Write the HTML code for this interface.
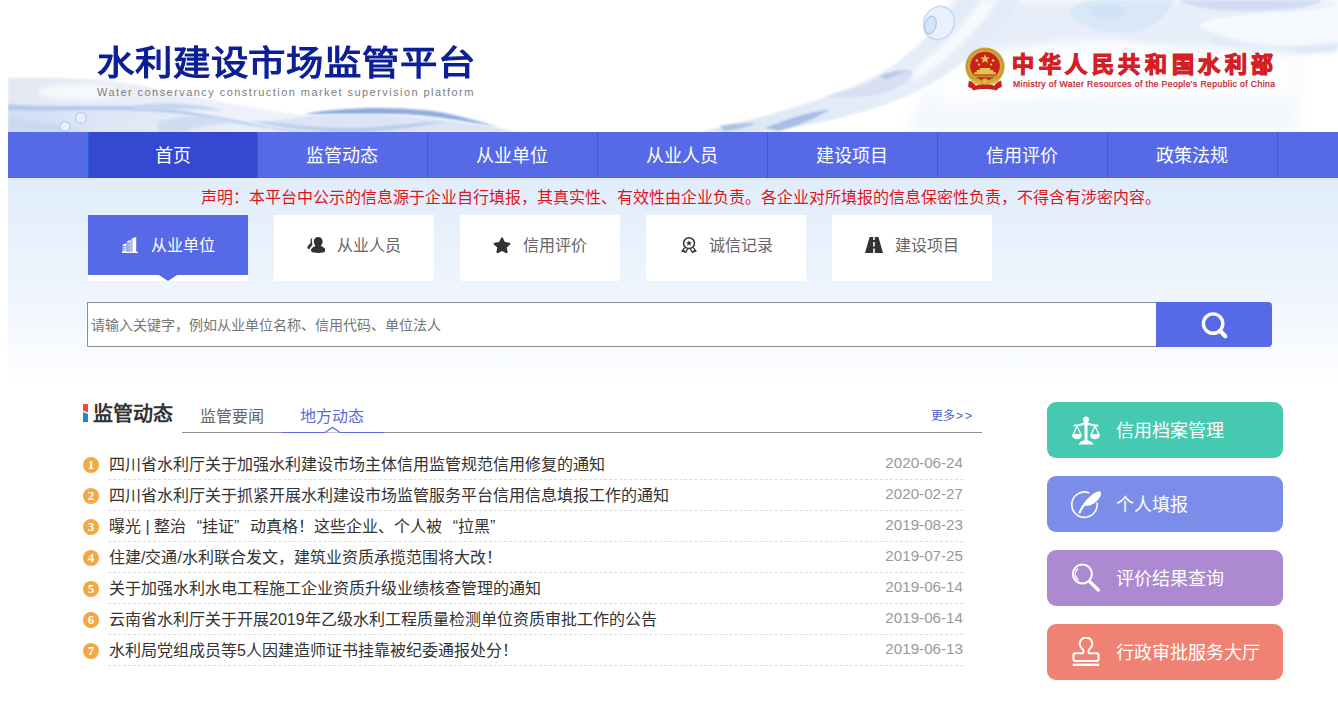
<!DOCTYPE html>
<html lang="zh-CN">
<head>
<meta charset="utf-8">
<title>水利建设市场监管平台</title>
<style>
*{box-sizing:border-box;}
html,body{margin:0;padding:0;}
body{width:1338px;height:713px;overflow:hidden;background:#fff;font-family:"Liberation Sans",sans-serif;color:#333;position:relative;}
a{text-decoration:none;color:inherit;}
ul{list-style:none;margin:0;padding:0;}
#wrap{position:absolute;left:8px;top:0;width:1330px;height:713px;overflow:hidden;background:#fff;}
/* header */
#header{position:absolute;left:0;top:0;width:1330px;height:132px;background:#fff;overflow:hidden;}
#header svg.bg{position:absolute;left:0;top:0;}
#logo{position:absolute;left:88.500px;top:39px;width:380px;height:48px;line-height:48px;font-size:34px;font-weight:normal;color:#0c1f96;white-space:nowrap;letter-spacing:0.4px;transform:scaleX(1.1);transform-origin:0 0;-webkit-text-stroke:1.2px #0c1f96;}
#logo-en{position:absolute;left:89px;top:84px;width:400px;height:16px;line-height:16px;font-size:11px;color:#7c7c7c;white-space:nowrap;letter-spacing:1.44px;}
#emblem{position:absolute;left:955.500px;top:47px;width:42px;height:44px;}
#mwr{position:absolute;left:1004px;top:48.500px;width:270px;height:32px;line-height:32px;font-size:22px;font-weight:bold;color:#d41f27;white-space:nowrap;letter-spacing:4.6px;-webkit-text-stroke:1.25px #d41f27;}
#mwr-en{position:absolute;left:1005px;top:78px;width:270px;height:12px;line-height:12px;font-size:8.6px;color:#c4202a;white-space:nowrap;letter-spacing:0.42px;-webkit-text-stroke:0.25px #c4202a;}
/* nav */
#nav{position:absolute;left:0;top:132px;width:1330px;height:46px;background:#566ae8;}
#nav ul{position:absolute;left:80px;top:0;width:1191px;height:46px;}
#nav li{position:absolute;top:0;height:46px;line-height:49px;padding-right:1px;text-align:center;font-size:18px;color:#fff;border-left:1px solid #2a62cf;overflow:hidden;white-space:nowrap;}
#nav li.on{background:#3448d2;}
#nav li:last-child{border-right:1px solid #2a62cf;}
/* band */
#band{position:absolute;left:0;top:178px;width:1330px;height:207px;background:linear-gradient(to bottom,#e1edfb 0%,#e8f1fc 30%,#eff5fd 55%,#f7fafe 80%,#fdfeff 100%);}
#notice{position:absolute;left:73px;top:185.5px;width:1200px;height:24px;line-height:24px;text-align:center;font-size:16px;color:#e0141e;white-space:nowrap;overflow:hidden;}
/* tabs */
.tab{position:absolute;top:215px;width:160px;height:66px;background:#fff;}
.tab .in{position:absolute;left:0;top:0;width:160px;height:60px;line-height:62px;font-size:16px;color:#666;white-space:nowrap;}
.tab .in span{position:absolute;left:63px;top:0;}
.tab .in svg{position:absolute;left:32px;top:20px;width:20px;height:20px;}
.tab.on .in{background:#566ae8;color:#fff;}
.tab.on:after{content:"";position:absolute;left:71px;top:60px;width:0;height:0;border-left:9px solid transparent;border-right:9px solid transparent;border-top:6px solid #566ae8;}
/* search */
#sinput{position:absolute;left:79px;top:302px;width:1070px;height:45px;border:1px solid #8a8e96;border-right:none;background:#fff;line-height:44px;font-size:14px;color:#757575;padding-left:3px;white-space:nowrap;overflow:hidden;}
#sbtn{position:absolute;left:1148px;top:302px;width:116px;height:45px;background:#566ae8;border-radius:0 4px 4px 0;}
#sbtn svg{position:absolute;left:0;top:0;}
/* news */
#ntitle{position:absolute;left:85px;top:400px;width:90px;height:28px;line-height:28px;font-size:20px;font-weight:bold;color:#333;white-space:nowrap;}
#nicon{position:absolute;left:75px;top:404px;width:5px;height:18px;}
.stab{position:absolute;top:405px;height:24px;line-height:24px;font-size:16px;color:#666;white-space:nowrap;}
#nline{position:absolute;left:174px;top:432px;width:800px;height:1px;background:#8d8f94;}
#more{position:absolute;left:923px;top:408px;width:50px;height:16px;line-height:16px;font-size:12px;color:#4a5dcf;white-space:nowrap;}#more span{letter-spacing:2px;margin-left:1px;}
#list li{position:absolute;left:75px;width:880px;height:31px;}
#list li i{position:absolute;left:0;top:8px;width:16px;height:16px;border-radius:8px;background:#f3a842;color:#fff;font-style:normal;font-weight:bold;font-size:13px;line-height:16px;text-align:center;font-family:"Liberation Serif",serif;}
#list li a{position:absolute;left:26px;top:5px;height:22px;line-height:22px;font-size:16px;color:#333;white-space:nowrap;}
#list li em{position:absolute;right:0;top:2.500px;height:22px;line-height:22px;font-size:15.200px;color:#999;font-style:normal;white-space:nowrap;}
#list li b{position:absolute;left:25px;right:0;top:30px;height:0;border-top:1px dashed #ddd;}
.ql,.qr{display:inline-block;width:16px;}.ql{text-align:right;}.qr{text-align:left;}
/* side */
.sb{position:absolute;left:1039px;width:236px;height:56px;border-radius:9px;color:#fff;font-size:18px;line-height:59.500px;white-space:nowrap;}
.sb span{position:absolute;left:69px;top:0;}
.sb svg{position:absolute;left:24px;top:13px;width:30px;height:30px;}
</style>
</head>
<body>
<div id="wrap">
  <div id="header">
    <svg class="bg" width="1330" height="132" viewBox="0 0 1330 132">
      <defs>
        <filter id="b1" x="-10%" y="-30%" width="120%" height="160%"><feGaussianBlur stdDeviation="0.8"/></filter>
        <filter id="b2" x="-10%" y="-30%" width="120%" height="160%"><feGaussianBlur stdDeviation="2"/></filter>
        <filter id="b4" x="-10%" y="-30%" width="120%" height="160%"><feGaussianBlur stdDeviation="4"/></filter>
        <filter id="b8" x="-10%" y="-40%" width="120%" height="180%"><feGaussianBlur stdDeviation="8"/></filter>
        <linearGradient id="lw" x1="0" y1="0" x2="1" y2="0"><stop offset="0" stop-color="#e3e8f3"/><stop offset="0.25" stop-color="#eaeef7"/><stop offset="0.6" stop-color="#f1f4fa"/><stop offset="1" stop-color="#fbfcfe"/></linearGradient>
        <linearGradient id="lw2" x1="0" y1="0" x2="1" y2="0"><stop offset="0" stop-color="#d3dff3"/><stop offset="0.4" stop-color="#dfe8f7"/><stop offset="1" stop-color="#eef3fb"/></linearGradient>
        <linearGradient id="rb" x1="0" y1="1" x2="1" y2="0"><stop offset="0" stop-color="#dbe5f6"/><stop offset="0.5" stop-color="#e6eef9"/><stop offset="1" stop-color="#e1eaf8"/></linearGradient>
      </defs>
      <!-- left wave -->
      <path d="M0 78 C45 77.500 90 78 125 84 C190 96 240 110 310 116 C390 122 450 118 520 132 L0 132 Z" fill="url(#lw)" filter="url(#b1)"/>
      <ellipse cx="72" cy="92" rx="42" ry="7.500" fill="#f6f8fc" filter="url(#b2)"/>
      <path d="M0 107 C50 110 100 104 140 107 C190 112 230 122 270 128 L300 132 L0 132 Z" fill="url(#lw2)" filter="url(#b1)"/>
      <path d="M0 104.500 C45 107.500 95 105 135 106.500 C185 110 225 121 265 127 C290 130 310 131 330 132 L290 132 C250 128 215 120 180 114.500 C140 109 95 109 50 110.500 C30 111 15 110.500 0 110 Z" fill="#b4c9ec" filter="url(#b1)"/>
      <path d="M125 106 C160 100 185 104 215 110 C190 110 160 108 125 112 Z" fill="#c6d6f0" filter="url(#b1)"/>
      <path d="M0 118 C30 120 60 126 80 132 L0 132 Z" fill="#c9d8f0" filter="url(#b2)"/>
      <path d="M150 122 C180 112 200 116 232 122 C210 124 190 126 175 132 L150 132 Z" fill="#d0dcf2" filter="url(#b1)"/>
      <path d="M296 114 C325 108.500 375 105.500 420 110.500 C440 113 460 118 490 127 C460 122 430 116 400 114.500 C365 113 330 115 296 114 Z" fill="#8eaade" filter="url(#b1)"/>
      <path d="M240 124 C280 120 300 114 340 114 C400 114 450 120 500 130 L505 132 L300 132 C280 130 260 128 240 124 Z" fill="#dbe5f6" filter="url(#b1)"/>
      <path d="M240 120 C270 122 300 128 340 128 C380 128 400 122 440 122 C410 126 380 132 340 132 C300 132 270 126 240 120 Z" fill="#b9cbec" filter="url(#b1)"/>
      <circle cx="73" cy="118" r="5.500" fill="#e9f0fb" stroke="#bccdec" stroke-width="1.300"/>
      <circle cx="57" cy="126.500" r="5" fill="#eaf1fb" stroke="#bccdec" stroke-width="1.300"/>
      <!-- right cloud -->
      <path d="M900 132 C905 100 940 60 1010 50 L1290 46 L1290 132 Z" fill="#f3f6fb" filter="url(#b8)"/>
      <path d="M940 0 L1330 0 L1330 50 C1260 56 1200 50 1140 44 C1080 38 1020 46 960 58 C950 40 945 20 940 0 Z" fill="#e7eefa" filter="url(#b4)"/>
      <path d="M1060 14 C1064 6 1075 0 1090 0 L1166 0 C1160 14 1150 26 1128 32 C1100 36 1075 28 1060 14 Z" fill="#d9e8f7" filter="url(#b1)"/>
      <path d="M1100 34 C1130 40 1160 30 1180 14 C1190 20 1200 30 1230 40 C1180 48 1130 44 1100 34 Z" fill="#e6eff9" filter="url(#b2)"/>
      <ellipse cx="1099" cy="10" rx="19" ry="8.500" fill="#d0e2f5" filter="url(#b1)"/>
      <path d="M1082 6 C1090 1 1108 1 1117 6" fill="none" stroke="#e4eefa" stroke-width="1.500" filter="url(#b1)"/>
      <path d="M1170 0 C1185 10 1230 14 1290 8 C1300 6 1310 3 1316 0 Z" fill="#d4dcf5" filter="url(#b1)"/>
      <path d="M1190 26 C1210 12 1260 16 1330 6 L1330 44 C1290 50 1230 46 1190 26 Z" fill="#f6f9fe" filter="url(#b1)"/>
      <path d="M1205 38 C1240 48 1290 50 1330 42 L1330 50 C1290 56 1240 54 1205 44 Z" fill="#dbe7f7" filter="url(#b2)"/>
      <path d="M930 62 C990 48 1100 48 1285 54 L1285 98 C1150 94 1000 100 930 106 Z" fill="#fdfeff" filter="url(#b8)"/>
      <!-- ribbon -->
      <path d="M692 132 C780 112 850 90 890 62 C912 44 934 24 950 0 L1012 0 C990 36 950 72 900 96 C850 116 800 127 750 132 Z" fill="url(#rb)" filter="url(#b1)"/>
      <path d="M905 70 C935 46 960 22 972 0 L990 0 C972 30 940 60 905 82 Z" fill="#f7f9fd" filter="url(#b2)"/>
      <path d="M872 76 C884 71 896 69.500 905 71 C903 80 890 90 868 95 C850 98 830 97 815 96 C840 92 862 84 872 76 Z" fill="#d6e0f2" filter="url(#b1)"/>
      <path d="M872 76 C884 71 896 69.500 905 71 C895 72 884 76 878 80 Z" fill="#b9c8e6" filter="url(#b1)"/>
      <path d="M712 126 C725 123.500 738 123 748 123.500 C740 127 728 130 716 131 Z" fill="#aec2e8" filter="url(#b1)"/>
      <path d="M757 128 C780 119 800 112 822 109.500 C808 118 790 126 770 131 Z" fill="#a9bde5" filter="url(#b1)"/>
      <ellipse cx="931" cy="23" rx="15" ry="17" transform="rotate(28 931 23)" fill="#e9f2fc" stroke="#c3d7f1" stroke-width="1.500"/>
      <ellipse cx="922.500" cy="25" rx="5.500" ry="9" transform="rotate(15 922.500 25)" fill="#d4e4f8" stroke="#a9c8ee" stroke-width="1.200"/>
    </svg>
    <div id="logo">水利建设市场监管平台</div>
    <div id="logo-en">Water conservancy construction market supervision platform</div>
    <div id="emblem"><svg width="42" height="44" viewBox="0.800 0 40.400 44" preserveAspectRatio="none">
      <circle cx="21" cy="19.5" r="19" fill="#cfa838"/>
      <circle cx="21" cy="19.5" r="17.2" fill="none" stroke="#b8892a" stroke-width="0.8"/>
      <circle cx="21" cy="19" r="14.3" fill="#cb211d"/>
      <path d="M21 7.2l1.2 3.3h3.5l-2.8 2.1 1 3.4-2.9-2-2.9 2 1-3.4-2.8-2.100h3.500z" fill="#f2d04a"/>
      <circle cx="13.200" cy="13.500" r="1.200" fill="#f2d04a"/><circle cx="15.200" cy="17.600" r="1.100" fill="#f2d04a"/><circle cx="28.800" cy="13.500" r="1.200" fill="#f2d04a"/><circle cx="26.800" cy="17.600" r="1.100" fill="#f2d04a"/>
      <path d="M10.500 27.500h21v-2.200h-2.500v-2.300h-3v-2h-10v2h-3v2.300h-2.500z" fill="#e8c24a"/>
      <path d="M9 28.500h24v1.800h-24z" fill="#c9962e"/>
      <path d="M7 31c4 3 9 4.500 14 4.500s10-1.500 14-4.500l-1 4c-4 2.500-8.500 3.500-13 3.500s-9-1-13-3.500z" fill="#e2b63f"/>
      <path d="M5.500 33.500c3 1 5 3 6.500 5.200 3-1 6-1.200 9-1.200s6 .2 9 1.200c1.500-2.200 3.500-4.200 6.500-5.200l.8 6.500c-2 .3-4 1.500-5.300 3.500-3.500-1.200-7.200-1.600-11-1.600s-7.500.4-11 1.600c-1.300-2-3.300-3.200-5.300-3.500z" fill="#c8201e"/>
      <circle cx="21" cy="34.500" r="3" fill="#e2b63f" stroke="#b8892a" stroke-width="0.600"/>
    </svg></div>
    <div id="mwr">中华人民共和国水利部</div>
    <div id="mwr-en">Ministry of Water Resources of the People's Republic of China</div>
  </div>
  <div id="nav">
    <ul>
      <li class="on" style="left:0px;width:169px">首页</li><li style="left:169px;width:170px">监管动态</li><li style="left:339px;width:170px">从业单位</li><li style="left:509px;width:170px">从业人员</li><li style="left:679px;width:170px">建设项目</li><li style="left:849px;width:170px">信用评价</li><li style="left:1019px;width:171px">政策法规</li>
    </ul>
  </div>
  <div id="band"></div>
  <div id="notice">声明：本平台中公示的信息源于企业自行填报，其真实性、有效性由企业负责。各企业对所填报的信息保密性负责，不得含有涉密内容。</div>

  <div class="tab on" style="left:80px"><div class="in"><svg style="left:34px;width:16px;height:16px;top:22px" viewBox="0 0 16 16"><g fill="#fff"><path d="M0 14.800h16V16H0z"/><path d="M10.300 1.200L14.200 0v15h-3.900z"/><path d="M5.200 4.200l4.300-2v12.800H5.200z"/><path d="M0.600 7.800l3.900-1.700V15H0.600z"/></g><g stroke="#566ae8" stroke-width="0.900"><path d="M0.400 9.300h3.300M0.400 11.200h3.300M0.400 13.100h3.300"/><path d="M5 6.300h2.800M5 8.200h2.800M5 10.100h2.800M5 12h2.800M5 13.800h2.800"/><path d="M8 3.200v12" stroke-width="0.700"/></g></svg><span>从业单位</span></div></div>
  <div class="tab" style="left:266px"><div class="in"><svg style="left:33px;width:18px;height:16px;top:22px" viewBox="0 0 18 16"><path d="M5.200 0.800C3.800 1.500 3.200 3 3.600 4.600 3.900 5.800 3.400 6.700 2.300 7.500 1 8.400 0.200 9.300 0.500 11.200L2.600 12.400C2.700 10.900 3.400 9.900 4.600 9 5.200 8.500 5.500 7.700 5.300 6.700 4.700 4.500 4.700 2.500 5.200 0.800Z" fill="#333"/><path d="M11.200 0C8.600 0 6.800 1.900 6.800 4.400c0 1.500.5 2.700 1.300 3.500.4.400.3 1-.2 1.300-2 .9-3.600 1.900-3.900 3.800-.2 1.300.8 2.300 2.400 2.600 1.500.3 3.200.4 4.800.4s3.300-.1 4.800-.4c1.600-.3 2.600-1.300 2.400-2.600-.3-1.900-1.900-2.900-3.900-3.800-.5-.3-.6-.9-.2-1.300.8-.8 1.300-2 1.300-3.500C15.600 1.900 13.800 0 11.200 0Z" fill="#333"/></svg><span>从业人员</span></div></div>
  <div class="tab" style="left:452px"><div class="in"><svg style="left:33px;width:18px;height:16px;top:22px" viewBox="0 0 18 16"><path d="M9 0.300c.4 0 .7.200.9.600l2 4.200 4.600.6c.9.100 1.200 1.100.6 1.700l-3.400 3.200.9 4.500c.2.900-.7 1.500-1.500 1.100L9 14l-4.100 2.200c-.8.400-1.700-.2-1.500-1.100l.9-4.500L.9 7.400C.3 6.800.6 5.800 1.500 5.700l4.600-.6 2-4.200c.2-.4.500-.6.900-.6z" fill="#333"/></svg><span>信用评价</span></div></div>
  <div class="tab" style="left:638px"><div class="in"><svg style="left:35px;width:16px;height:16px;top:22px" viewBox="0 0 16 16"><circle cx="8" cy="6.200" r="5.400" fill="none" stroke="#333" stroke-width="1.500"/><path d="M8 3.200l.9 2h2.100l-1.700 1.400.7 2.100L8 7.500 6 8.700l.7-2.100L5 5.200h2.100z" fill="#333"/><path d="M3.600 10.600L1 14.300l2.300-.3.900 2 2.300-3.800M12.400 10.600l2.600 3.700-2.300-.3-.9 2-2.300-3.800" fill="none" stroke="#333" stroke-width="1.300" stroke-linejoin="round"/></svg><span>诚信记录</span></div></div>
  <div class="tab" style="left:824px"><div class="in"><svg style="left:33px;width:18px;height:16px;top:22px" viewBox="0 0 18 16"><path d="M4.600 0h3.600v3h1.600V0h3.600L18 16H9.800v-4.500H8.200V16H0z M8.200 5v4.500h1.600V5z" fill="#333" fill-rule="evenodd"/></svg><span>建设项目</span></div></div>

  <div id="sinput">请输入关键字，例如从业单位名称、信用代码、单位法人</div>
  <div id="sbtn"><svg width="116" height="45" viewBox="0 0 116 45"><circle cx="57.100" cy="21.600" r="9.700" fill="none" stroke="#fff" stroke-width="3.400"/><path d="M64.500 29.200L69.300 34.200" stroke="#fff" stroke-width="4.200" stroke-linecap="round"/></svg></div>

  <div id="nicon"><svg width="5" height="18" viewBox="0 0 5 18"><path d="M0 0h5v8.500L0 6.500z" fill="#f0483e"/><path d="M0 8l5 2v8H0z" fill="#1f86e0"/></svg></div>
  <div id="ntitle">监管动态</div>
  <div class="stab" style="left:192px">监管要闻</div>
  <div class="stab" style="left:292px;color:#5a6be0">地方动态</div>
  <div id="nline"></div>
  <svg id="ncaret" width="102" height="8" viewBox="0 0 102 8" style="position:absolute;left:273.500px;top:426px"><path d="M0 6.500H43L50.500 1.200L58 6.500H102" fill="#fff" stroke="#5b6be0" stroke-width="1.200"/></svg>
  <a id="more">更多<span>&gt;&gt;</span></a>
  <ul id="list">
    <li style="top:449px"><i>1</i><a>四川省水利厅关于加强水利建设市场主体信用监管规范信用修复的通知</a><em>2020-06-24</em><b></b></li>
    <li style="top:480px"><i>2</i><a>四川省水利厅关于抓紧开展水利建设市场监管服务平台信用信息填报工作的通知</a><em>2020-02-27</em><b></b></li>
    <li style="top:511px"><i>3</i><a>曝光 | 整治<span class="ql">“</span>挂证<span class="qr">”</span>动真格！这些企业、个人被<span class="ql">“</span>拉黑<span class="qr">”</span></a><em>2019-08-23</em><b></b></li>
    <li style="top:542px"><i>4</i><a>住建/交通/水利联合发文，建筑业资质承揽范围将大改！</a><em>2019-07-25</em><b></b></li>
    <li style="top:573px"><i>5</i><a>关于加强水利水电工程施工企业资质升级业绩核查管理的通知</a><em>2019-06-14</em><b></b></li>
    <li style="top:604px"><i>6</i><a>云南省水利厅关于开展2019年乙级水利工程质量检测单位资质审批工作的公告</a><em>2019-06-14</em><b></b></li>
    <li style="top:635px"><i>7</i><a>水利局党组成员等5人因建造师证书挂靠被纪委通报处分！</a><em>2019-06-13</em><b></b></li>
  </ul>

  <a class="sb" style="top:402px;background:#46c9b1"><svg viewBox="0 0 30 30" style="left:24px;top:13px"><g fill="#fff"><circle cx="15" cy="4.600" r="3"/><path d="M13.500 6.500h3v19.500h-3z"/><path d="M7.500 29.500c.8-2.300 2.800-3.800 5.500-4h4c2.700.2 4.700 1.700 5.500 4z"/><path d="M2.800 9.800c4-.2 7.500-.9 10.200-2.200h4c2.700 1.300 6.200 2 10.200 2.200v1.700c-4.200-.1-7.700-.7-10.400-1.700h-3.600c-2.700 1-6.200 1.600-10.400 1.700z"/><path d="M1 19.500h10c0 2.800-2.200 4.700-5 4.700s-5-1.900-5-4.700z M19 19.500h10c0 2.800-2.200 4.700-5 4.700s-5-1.900-5-4.700z"/></g><g fill="none" stroke="#fff" stroke-width="1.300" stroke-linejoin="round"><path d="M6 11L2 19.800h8z"/><path d="M24 11l-4 8.800h8z"/></g></svg><span>信用档案管理</span></a>
  <a class="sb" style="top:476px;background:#7b8de9"><svg viewBox="0 0 30 30" style="left:24px;top:13px"><path d="M26.1 14.2A12.7 12.7 0 1 1 17.8 3.7" fill="none" stroke="#fff" stroke-width="1.600" stroke-linecap="round"/><path d="M7.200 24.300C9 20 11.500 15.500 15 11.500 18.500 7.500 23 3.500 27 2.400c2.400-.6 3.600.8 3 3-.9 3.400-3.600 6.500-6.800 8.800-2.800 2-6.300 2.900-9.300 2.500-1.700 2-3.200 4.500-4.600 7.800z" fill="#fff"/></svg><span>个人填报</span></a>
  <a class="sb" style="top:550px;background:#ac8ad1"><svg viewBox="0 0 30 30" style="left:24px;top:13px"><circle cx="11.400" cy="11" r="9.500" fill="none" stroke="#fff" stroke-width="2"/><path d="M7.200 5.500A6.800 6.800 0 0 0 7.600 17" fill="none" stroke="#fff" stroke-width="1.300"/><path d="M18.300 18.300L27.300 27" stroke="#fff" stroke-width="3.400" stroke-linecap="round"/></svg><span>评价结果查询</span></a>
  <a class="sb" style="top:624px;background:#f08273"><svg viewBox="0 0 30 30" style="left:24px;top:13px"><path d="M12 16.300C13 14 12.600 12.600 11 11.600A6.300 6.300 0 1 1 19 11.600C17.400 12.600 17 14 18 16.300H25.800A1.700 1.700 0 0 1 27.500 18V22.200A1.700 1.700 0 0 1 25.800 23.900H4.200A1.700 1.700 0 0 1 2.500 22.200V18A1.700 1.700 0 0 1 4.200 16.300Z" fill="none" stroke="#fff" stroke-width="2" stroke-linejoin="round"/><path d="M1.800 27.800h26.400" stroke="#fff" stroke-width="2.300"/></svg><span>行政审批服务大厅</span></a>
</div>
</body>
</html>
